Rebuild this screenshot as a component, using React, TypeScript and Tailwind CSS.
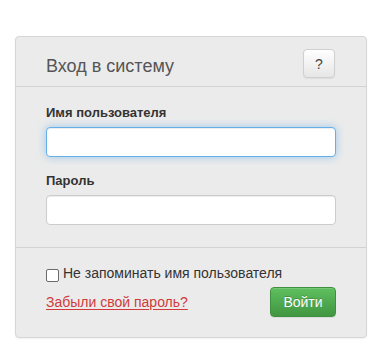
import { useState } from "react";

function App() {
  const [remember, setRemember] = useState(false);

  return (
    <div className="min-h-screen bg-white pt-[36px] pl-[15px] font-['Liberation_Sans',Arial,sans-serif]">
      <form
        className="w-[352px] rounded-[4px] border border-[#d6d6d6] bg-[#ebebeb] shadow-[0_1px_2px_rgba(0,0,0,0.06)]"
        onSubmit={(e) => e.preventDefault()}
      >
        <div className="flex h-[50px] items-start justify-between border-b border-[#d2d2d2] px-[30px] pt-[12px]">
          <h2 className="mt-[7px] text-[18px] leading-[20px] text-[#555]">
            Вход в систему
          </h2>
          <button
            type="button"
            className="mr-px h-[29px] w-[32px] rounded-[4px] border border-[#cfcfcf] bg-gradient-to-b from-white to-[#e6e6e6] text-[14px] leading-none text-[#444] shadow-[0_1px_1px_rgba(0,0,0,0.06)]"
          >
            ?
          </button>
        </div>

        <div className="border-b border-[#d2d2d2] px-[30px] pt-[17px] pb-[22px]">
          <label
            htmlFor="username"
            className="mb-[5px] block text-[13px] leading-[18px] font-bold text-[#333]"
          >
            Имя пользователя
          </label>
          <input
            id="username"
            type="text"
            className="block h-[30px] w-full rounded-[4px] border border-[#66afe9] bg-white px-2 text-[14px] text-[#333] shadow-[inset_0_1px_1px_rgba(0,0,0,0.075),0_0_8px_rgba(102,175,233,0.6)] outline-none"
          />
          <label
            htmlFor="password"
            className="mt-[15px] mb-[5px] block text-[13px] leading-[18px] font-bold text-[#333]"
          >
            Пароль
          </label>
          <input
            id="password"
            type="password"
            className="block h-[30px] w-full rounded-[4px] border border-[#ccc] bg-white px-2 text-[14px] text-[#333] shadow-[inset_0_1px_1px_rgba(0,0,0,0.075)] outline-none"
          />
        </div>

        <div className="px-[30px] pt-[15px] pb-[20px]">
          <label className="flex h-[20px] items-center text-[14px] text-[#333]">
            <input
              type="checkbox"
              checked={remember}
              onChange={(e) => setRemember(e.target.checked)}
              className="m-0 mt-[4px] mr-[4px] h-[13px] w-[13px] appearance-none rounded-[2px] border border-[#6b6b6b] bg-white checked:bg-[#3b82f6]"
            />
            Не запоминать имя пользователя
          </label>
          <div className="mt-[4px] flex items-center justify-between">
            <a
              href="#"
              className="mt-[1px] text-[14px] text-[#cf3b3b] underline underline-offset-[2px]"
            >
              Забыли свой пароль?
            </a>
            <button
              type="submit"
              className="h-[30px] w-[66px] rounded-[4px] border border-[#3e8f3e] bg-gradient-to-b from-[#5fbf5f] to-[#419641] text-[14px] text-white shadow-[inset_0_1px_0_rgba(255,255,255,0.15),0_1px_1px_rgba(0,0,0,0.075)] [text-shadow:0_-1px_0_rgba(0,0,0,0.2)]"
            >
              Войти
            </button>
          </div>
        </div>
      </form>
    </div>
  );
}

export default App;
